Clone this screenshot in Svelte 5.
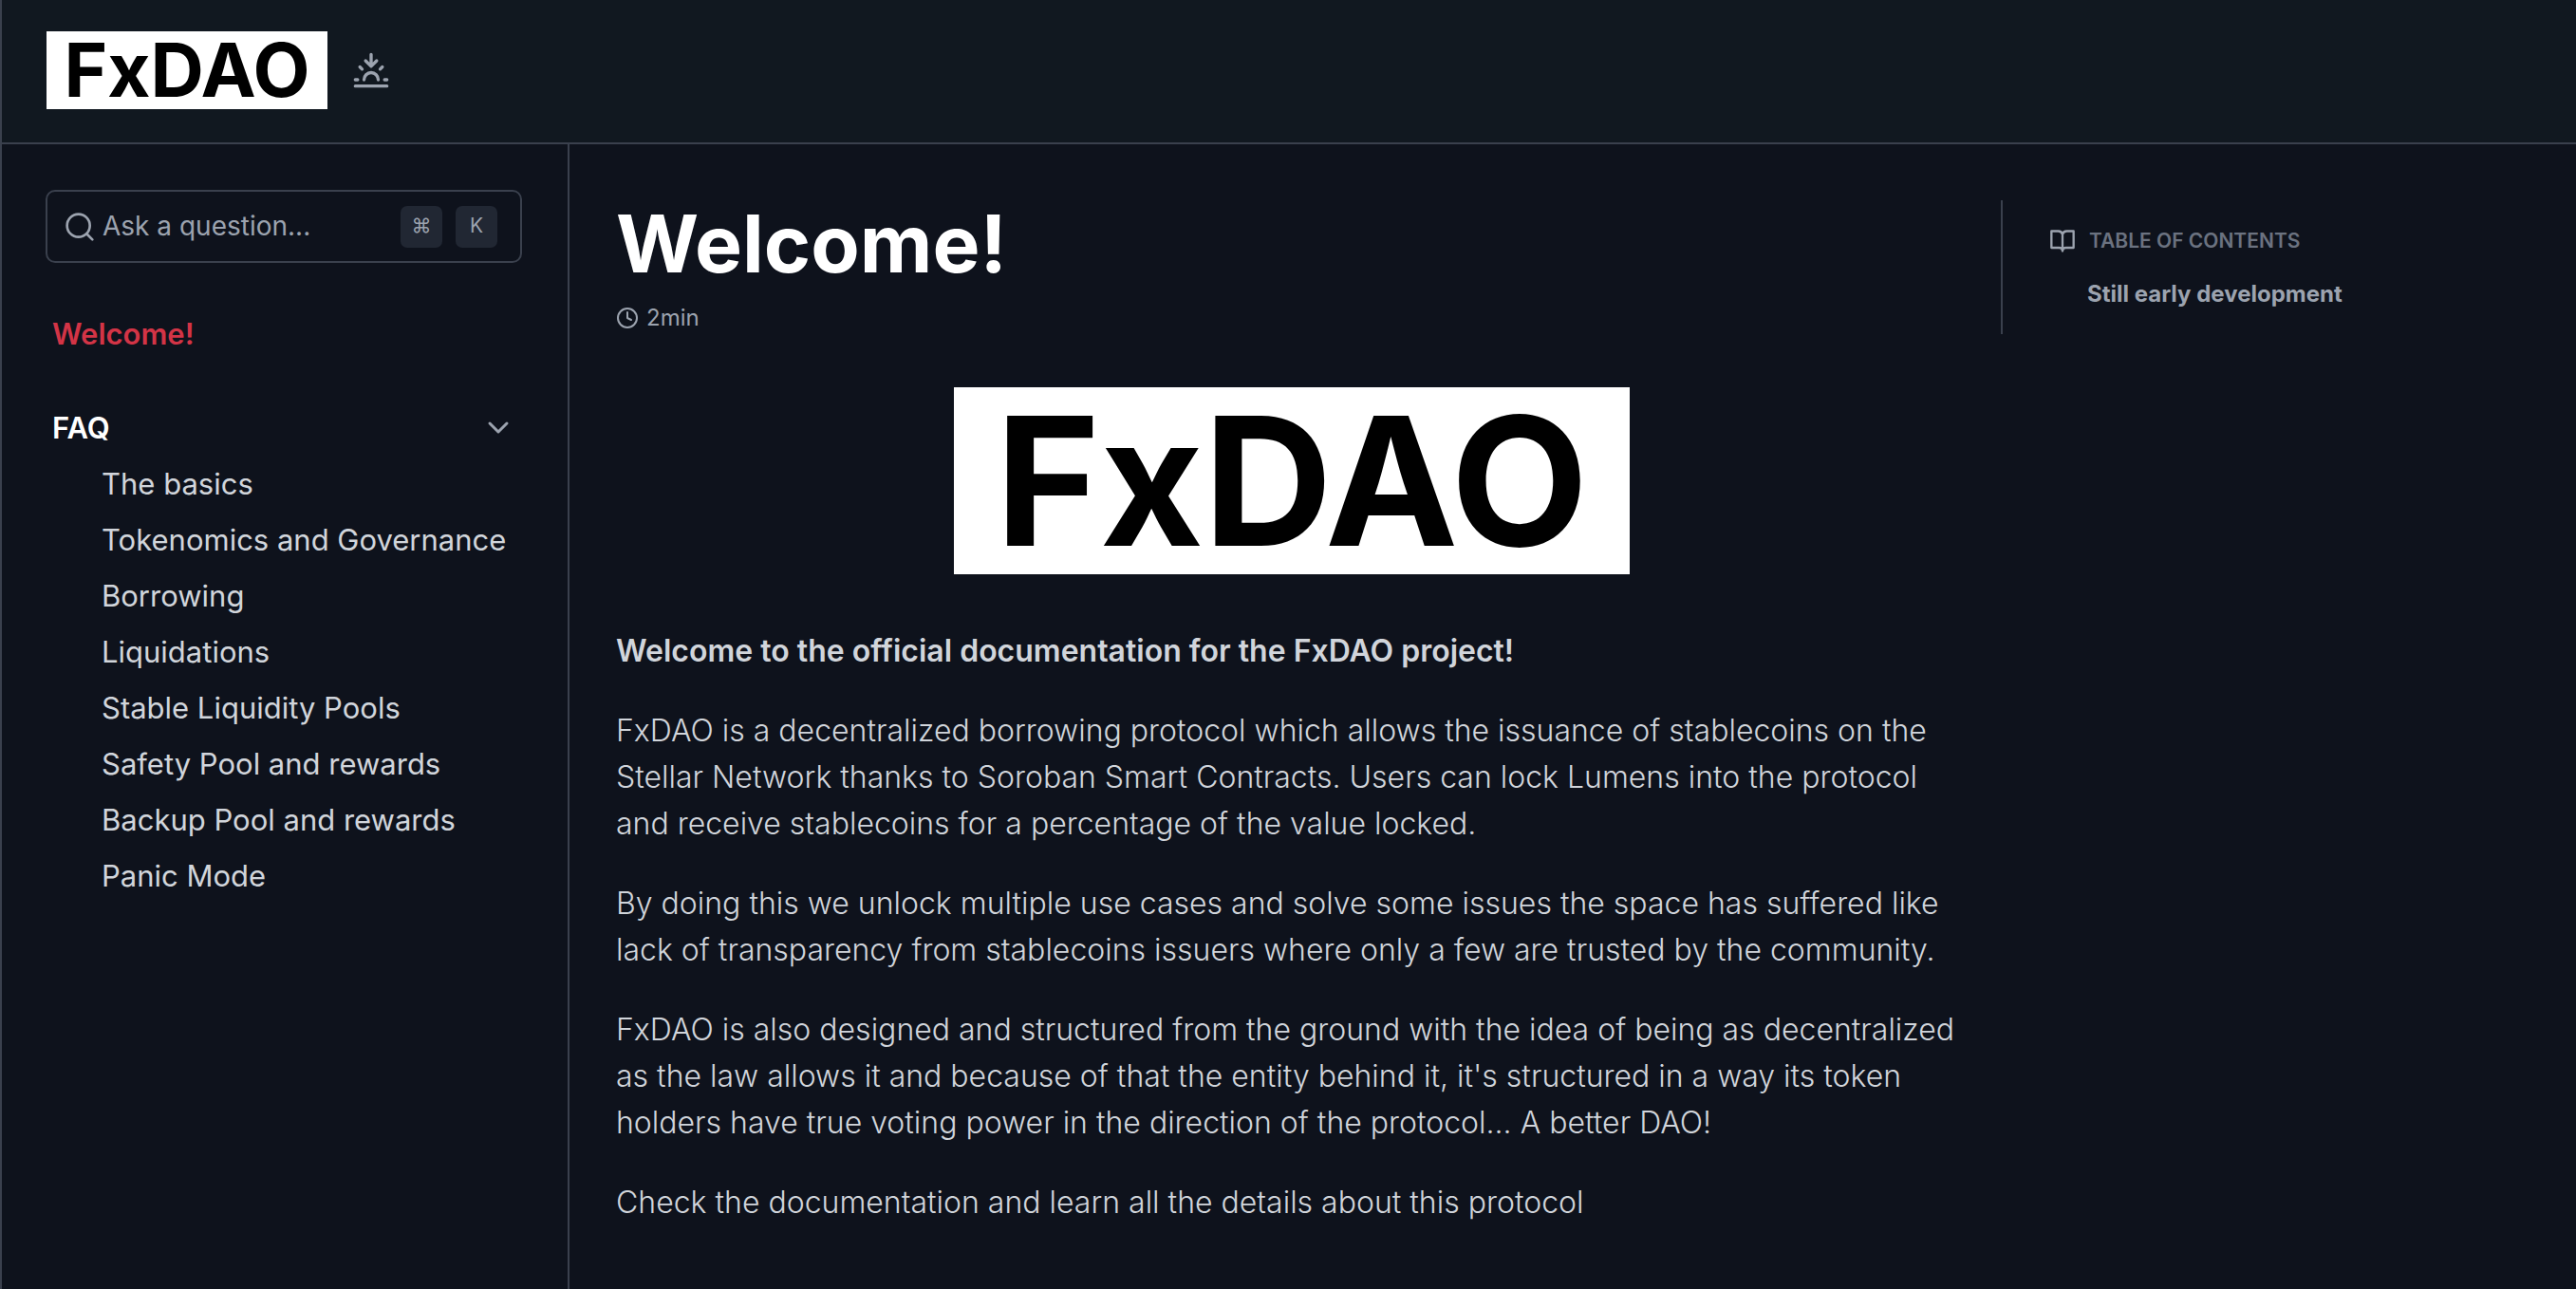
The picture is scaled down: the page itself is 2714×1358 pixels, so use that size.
<script lang="ts">
  const pages = [
    'The basics',
    'Tokenomics and Governance',
    'Borrowing',
    'Liquidations',
    'Stable Liquidity Pools',
    'Safety Pool and rewards',
    'Backup Pool and rewards',
    'Panic Mode'
  ];
  let open = $state(true);
</script>

<div class="app">
  <header class="topbar">
    <a class="logo small" href="#home">FxDAO</a>
    <button class="icon-button" aria-label="Toggle theme">
      <svg width="40" height="40" viewBox="0 0 24 24">
        <path d="M12 2v7M8.5 6 12 9.5 15.5 6M4.9 9.9l1.4 1.4M2 18h1.5M20.5 18H22M19.1 9.9l-1.4 1.4M22 22H2M16.5 18a4.5 4.5 0 0 0-9 0" />
      </svg>
    </button>
  </header>

  <div class="columns">
    <aside class="sidebar">
      <button class="search">
        <svg width="32" height="32" viewBox="0 0 24 24">
          <circle cx="11" cy="11" r="9" />
          <path d="m22 22-4.6-4.6" />
        </svg>
        <span class="prompt">Ask a question...</span>
        <kbd>⌘</kbd>
        <kbd>K</kbd>
      </button>
      <nav aria-label="Pages">
        <a class="current" href="#welcome">Welcome!</a>
        <button class="group" aria-expanded={open} onclick={() => (open = !open)}>
          <span>FAQ</span>
          <svg class="chevron" width="24" height="24" viewBox="0 0 24 24"><path d="m3 7 9 9 9-9" /></svg>
        </button>
        {#if open}
          <ul>
            {#each pages as page}
              <li><a href="#page">{page}</a></li>
            {/each}
          </ul>
        {/if}
      </nav>
    </aside>

    <main>
      <h1>Welcome!</h1>
      <p class="time">
        <svg width="24" height="24" viewBox="0 0 24 24">
          <circle cx="12" cy="12" r="10" />
          <path d="M12 6v6l4 2" />
        </svg>
        <span>2min</span>
      </p>
      <div class="logo large" role="img" aria-label="FxDAO">FxDAO</div>
      <p><strong>Welcome to the official documentation for the FxDAO project!</strong></p>
      <p>FxDAO is a decentralized borrowing protocol which allows the issuance of stablecoins on the Stellar Network thanks to Soroban Smart Contracts. Users can lock Lumens into the protocol and receive stablecoins for a percentage of the value locked.</p>
      <p>By doing this we unlock multiple use cases and solve some issues the space has suffered like lack of transparency from stablecoins issuers where only a few are trusted by the community.</p>
      <p>FxDAO is also designed and structured from the ground with the idea of being as decentralized as the law allows it and because of that the entity behind it, it's structured in a way its token holders have true voting power in the direction of the protocol... A better DAO!</p>
      <p>Check the documentation and learn all the details about this protocol</p>
    </main>

    <aside class="contents">
      <h2>
        <svg width="28" height="28" viewBox="0 0 24 24">
          <path d="M12 6a4 4 0 0 0-4-3H2v15h7a3 3 0 0 1 3 3 3 3 0 0 1 3-3h7V3h-6a4 4 0 0 0-4 3v15" />
        </svg>
        <span>TABLE OF CONTENTS</span>
      </h2>
      <a href="#still-early">Still early development</a>
    </aside>
  </div>
</div>

<style>
  :global(body) {
    margin: 0;
    background: #0e121c;
  }
  .app {
    min-height: 100vh;
    box-sizing: border-box;
    display: flex;
    flex-direction: column;
    border-left: 2px solid #3a404d;
    color: #d1d5db;
    font-family: Inter, sans-serif;
    font-size: 31px;
    line-height: 49px;
  }
  svg {
    flex: none;
    fill: none;
    stroke: #9ca3af;
    stroke-width: 2;
    stroke-linecap: round;
    stroke-linejoin: round;
  }
  button {
    padding: 0;
    border: 0;
    background: none;
    color: inherit;
    font: inherit;
    cursor: pointer;
  }
  a {
    color: inherit;
    text-decoration: none;
  }
  .topbar {
    display: flex;
    align-items: center;
    gap: 26px;
    height: 148px;
    padding: 0 47px 2px;
    background: #111820;
    border-bottom: 2px solid #3a404d;
  }
  .icon-button {
    display: flex;
  }
  .logo {
    display: flex;
    align-items: center;
    justify-content: center;
    background: #fff;
    color: #000;
    font-weight: 700;
  }
  .logo.small {
    width: 296px;
    height: 82px;
    font-size: 78px;
    line-height: 82px;
  }
  .logo.large {
    width: 712px;
    height: 197px;
    margin: 49px auto 56px;
    font-size: 188px;
    line-height: 197px;
  }
  .columns {
    flex: 1;
    display: flex;
    align-items: stretch;
  }
  .sidebar {
    flex: none;
    width: 598px;
    box-sizing: border-box;
    padding: 48px 48px 48px 46px;
    border-right: 2px solid #3a404d;
  }
  .search {
    display: flex;
    align-items: center;
    width: 100%;
    height: 77px;
    padding: 0 24px 0 18px;
    border: 2px solid #3a404d;
    border-radius: 10px;
    box-sizing: border-box;
    color: #9ca3af;
    font-size: 28px;
    gap: 8px;
  }
  .prompt {
    flex: 1;
    text-align: left;
  }
  kbd {
    width: 44px;
    height: 44px;
    margin-left: 6px;
    border-radius: 7px;
    background: #212733;
    font-family: Inter, sans-serif;
    font-size: 21px;
    line-height: 42px;
    text-align: center;
  }
  nav {
    padding: 50px 13px 0 7px;
  }
  .current {
    display: block;
    color: #d33446;
    font-weight: 600;
  }
  .group {
    display: flex;
    align-items: center;
    justify-content: space-between;
    width: 100%;
    margin-top: 50px;
    color: #fff;
    font-weight: 600;
  }
  .chevron {
    stroke-width: 3;
  }
  ul {
    margin: 5px 0 0;
    padding: 0 0 0 52px;
    list-style: none;
  }
  li {
    line-height: 59px;
    white-space: nowrap;
  }
  main {
    flex: 1;
    min-width: 0;
    padding: 60px 35px 48px 49px;
    font-size: 32px;
    font-weight: 300;
  }
  h1 {
    margin: 0;
    color: #fff;
    font-size: 84px;
    line-height: 90px;
    font-weight: 700;
  }
  main p {
    margin: 0 0 35px;
  }
  strong {
    font-weight: 600;
  }
  main .time {
    display: flex;
    align-items: center;
    gap: 8px;
    margin: 8px 0 0;
    color: #9ca3af;
    font-size: 24px;
    font-weight: 400;
  }
  .contents {
    flex: none;
    align-self: flex-start;
    width: 606px;
    box-sizing: border-box;
    margin-top: 59px;
    padding: 18px 0 18px 49px;
    border-left: 2px solid #3a404d;
    color: #9ca3af;
    font-size: 24px;
    font-weight: 700;
  }
  h2 {
    display: flex;
    align-items: center;
    gap: 14px;
    margin: 0 0 7px;
    color: #6b7280;
    font-size: 21px;
    font-weight: 600;
  }
  .contents a {
    display: block;
    padding-left: 40px;
  }
</style>
